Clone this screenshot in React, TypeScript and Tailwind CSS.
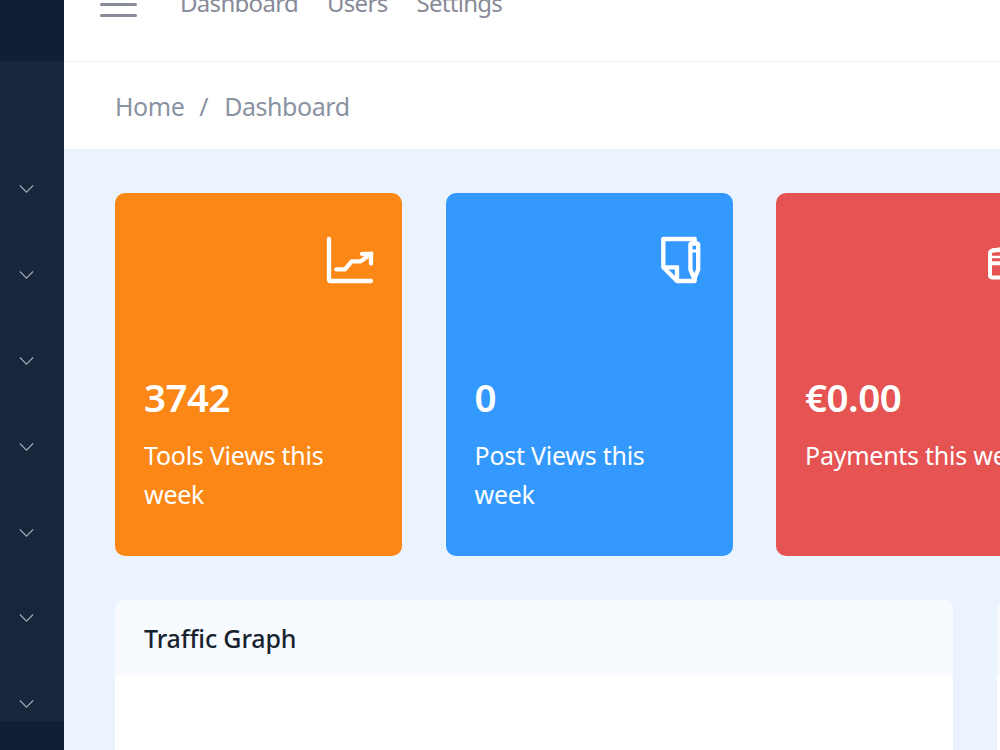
import React from 'react';

const navLinks = ['Dashboard', 'Users', 'Settings'];

const NAV_GROUPS = 7;

function ChartLineIcon() {
  return (
    <svg className="block" width="48" height="48" viewBox="0 0 48 48" fill="none" stroke="currentColor" strokeWidth="4.3" strokeLinecap="round" strokeLinejoin="round">
      <path d="M3 3v40.4c0 1 .6 1.6 1.6 1.6H45" />
      <path d="M10.3 33.4H19l6.7-8.1h9L45 17.8" />
      <path d="M36 17.8h9v9.7" strokeLinejoin="miter" />
    </svg>
  );
}

function NotesIcon() {
  return (
    <svg className="block" width="48" height="48" viewBox="0 0 48 48" fill="none" stroke="currentColor" strokeWidth="4.3" strokeLinejoin="round">
      <path d="M37.7 8V3H6.3v28.3L20 45h17.7v-4" />
      <path d="M6.3 31.3H20V45" strokeLinejoin="miter" />
      <path d="M33.4 9c0-1 .5-1.5 1.5-1.5h4.8c1 0 1.5.5 1.5 1.5v24.6l-3.4 8h-1l-3.4-8z" />
      <path d="M33.4 15h8" strokeWidth="3" />
    </svg>
  );
}

function WalletIcon() {
  return (
    <svg className="block" width="48" height="48" viewBox="0 0 48 48" fill="none" stroke="currentColor" strokeWidth="4" strokeLinejoin="round">
      <path d="M3 17.5c0-1.5.7-2.4 2-2.8L14 13h29v28.4H4.7c-1 0-1.7-.7-1.7-1.7z" />
      <path d="M5 14.3h38" />
      <path d="M3 21h40" strokeWidth="2.6" />
      <path d="M3 27.2h40" />
    </svg>
  );
}

function Chevron() {
  return (
    <svg className="block" width="15" height="8" viewBox="0 0 15 8" fill="none" stroke="#a5abb6" strokeWidth="1.1">
      <path d="M.9.5 7.5 7.1 14.1.5" />
    </svg>
  );
}

interface StatCardProps {
  value: string;
  label: string;
  color: string;
  icon: React.ReactNode;
}

function StatCard({ value, label, color, icon }: StatCardProps) {
  return (
    <div className={`w-[287px] h-[363px] shrink-0 rounded-[10px] px-[29px] pt-[43px] text-white ${color}`}>
      <div className="flex justify-end -mr-px">{icon}</div>
      <div className="mt-[83px] h-[60px] text-[38.5px] leading-[60px] font-semibold tracking-[-0.5px]">{value}</div>
      <div className="mt-[9px] text-[25px] leading-[39px] tracking-[-0.25px]">{label}</div>
    </div>
  );
}

function Sidebar() {
  return (
    <aside className="flex w-16 shrink-0 flex-col bg-[#18263c]">
      <div className="h-[61px] bg-[#121e35]" />
      <div className="flex h-[660px] flex-col items-start pt-[85.5px] pl-[19px]">
        {Array.from({ length: NAV_GROUPS }, (_, i) => (
          <div key={i} className="flex h-[85.8px] shrink-0 items-center">
            <Chevron />
          </div>
        ))}
      </div>
      <div className="flex-1 bg-[#121e35]" />
    </aside>
  );
}

function Header() {
  return (
    <header className="shrink-0 bg-white text-[#8a93a2]">
      <div className="flex h-[62px] items-start border-b border-[#f0f1f3] pl-9">
        {/* menu toggle */}
        <div className="mt-[-8px] flex w-[37px] flex-col gap-2 text-[#888b99]">
          <span className="h-[3px] rounded-full bg-current" />
          <span className="h-[3px] rounded-full bg-current" />
          <span className="h-[3px] rounded-full bg-current" />
        </div>
        <nav className="mt-[-17px] ml-[43px] flex gap-[29px] text-[24px] leading-[39px] tracking-[-0.7px] text-[#888b99]">
          {navLinks.map((link) => (
            <a key={link}>{link}</a>
          ))}
        </nav>
      </div>
      <div className="flex h-[87px] items-center pt-[2px] pl-[51px] text-[25px] leading-[39px] tracking-[-0.45px]">
        <span>Home</span>
        <span className="mr-4 ml-[15px]">/</span>
        <span>Dashboard</span>
      </div>
    </header>
  );
}

export default function App() {
  return (
    <div className="flex h-[750px] w-[1000px] overflow-hidden bg-[#ebf3ff] font-['Noto_Sans',sans-serif]">
      <Sidebar />
      <div className="flex min-w-0 flex-1 flex-col overflow-hidden">
        <Header />
        <main className="flex-1 pt-11 pl-[51px]">
          <div className="flex gap-[43.5px]">
            <StatCard value="3742" label="Tools Views this week" color="bg-[#fb8717]" icon={<ChartLineIcon />} />
            <StatCard value="0" label="Post Views this week" color="bg-[#3399ff]" icon={<NotesIcon />} />
            <StatCard value="€0.00" label="Payments this week" color="bg-[#e55353]" icon={<WalletIcon />} />
          </div>
          <div className="mt-11 flex gap-11">
            <section className="h-[300px] w-[838px] shrink-0 overflow-hidden rounded-[10px] bg-white">
              <div className="h-[75px] bg-[#f7faff] pl-[29px] text-[25px] leading-[77px] font-medium tracking-[-0.15px] text-[#18222f]">
                Traffic Graph
              </div>
            </section>
            <section className="h-[300px] w-[400px] shrink-0 overflow-hidden rounded-[10px] bg-white">
              <div className="h-[75px] bg-[#f7faff]" />
            </section>
          </div>
        </main>
      </div>
    </div>
  );
}
